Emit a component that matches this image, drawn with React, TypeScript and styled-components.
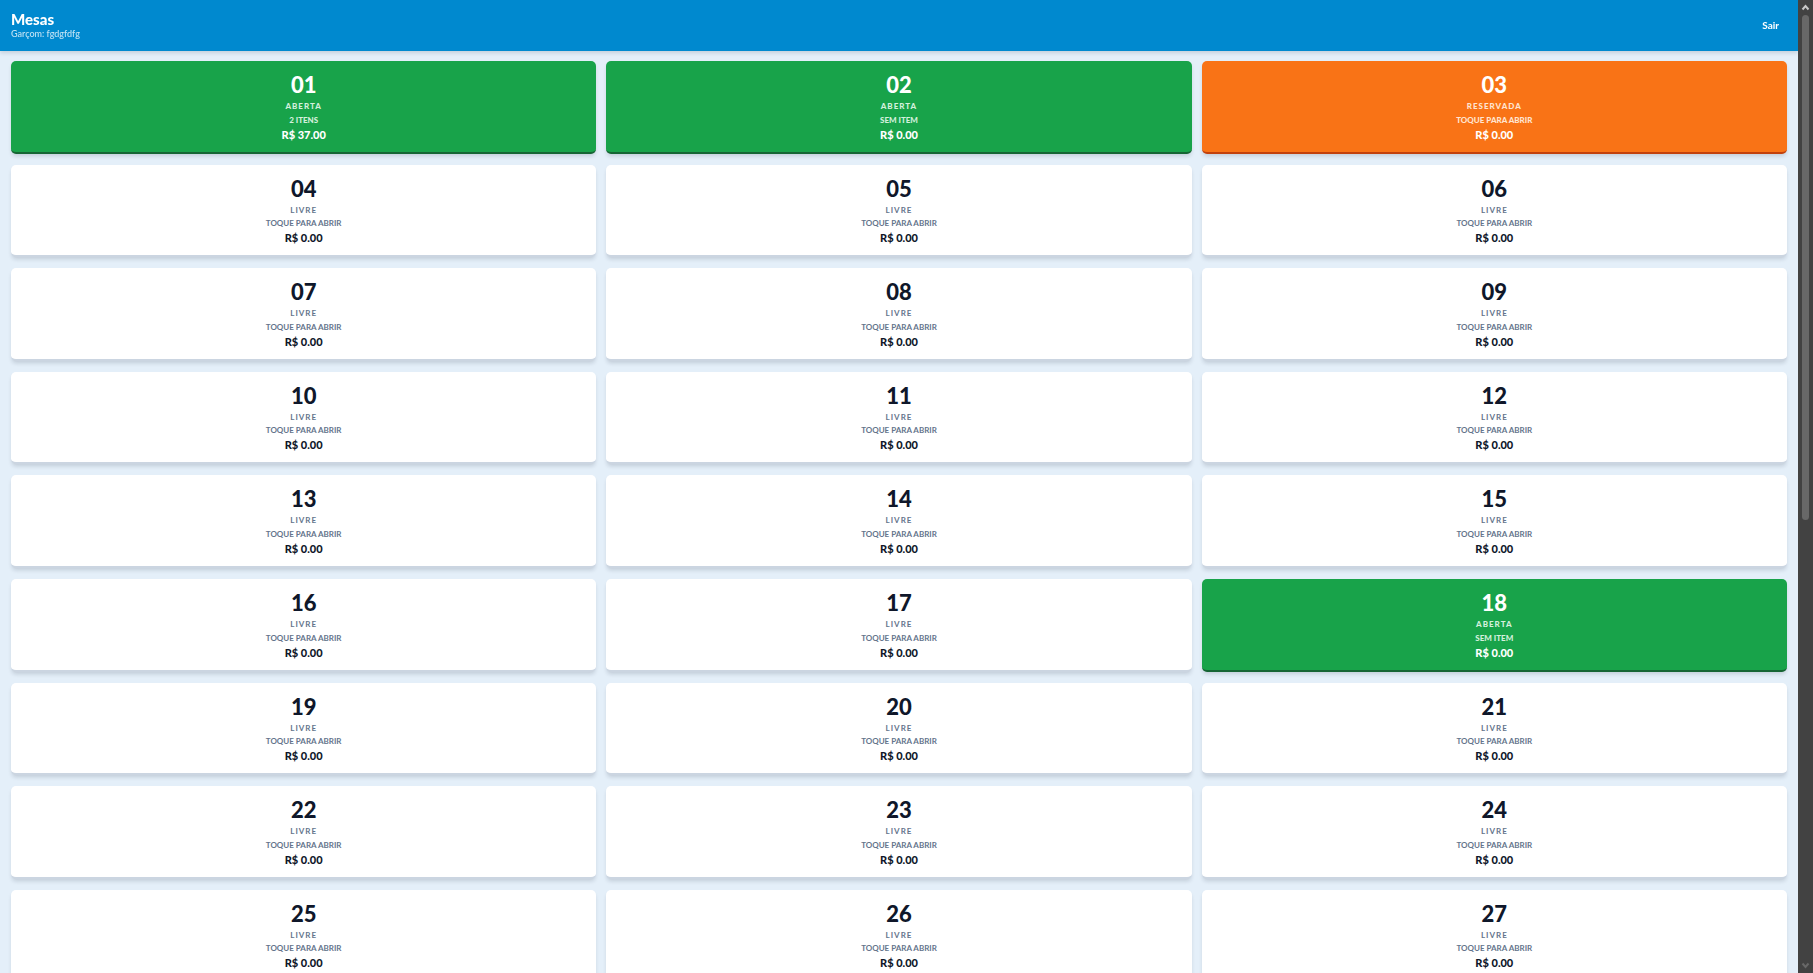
import React from "react";
import styled, { createGlobalStyle, css } from "styled-components";

type Status = "livre" | "aberta" | "reservada";

interface Table {
  number: number;
  status: Status;
  detail: string;
  total: number;
}

const palette = {
  livre: { background: "#ffffff", edge: "#cbd5e1", number: "#0f172a", label: "#64748b", price: "#0f172a" },
  aberta: { background: "#18a34a", edge: "#166534", number: "#ffffff", label: "#d3f0dc", price: "#ffffff" },
  reservada: { background: "#f97316", edge: "#c2410c", number: "#ffffff", label: "#ffe4d0", price: "#ffffff" },
};

const busyTables: Record<number, Partial<Table>> = {
  1: { status: "aberta", detail: "2 itens", total: 37 },
  2: { status: "aberta", detail: "Sem item" },
  3: { status: "reservada" },
  18: { status: "aberta", detail: "Sem item" },
};

const tables: Table[] = Array.from({ length: 27 }, (_, index) => ({
  number: index + 1,
  status: "livre",
  detail: "Toque para abrir",
  total: 0,
  ...busyTables[index + 1],
}));

const GlobalStyle = createGlobalStyle`
  *, *::before, *::after { box-sizing: border-box; }
  body {
    margin: 0;
    background: #e4eff9;
    font-family: Lato, "Open Sans", sans-serif;
  }
  button { font-family: inherit; border: 0; cursor: pointer; }
`;

const Shell = styled.div`
  display: flex;
  height: 100vh;
  overflow: hidden;
`;

const Viewport = styled.div`
  flex: 1;
  min-width: 0;
  overflow-y: auto;
  scrollbar-width: none;
`;

const Header = styled.header`
  position: sticky;
  top: 0;
  z-index: 1;
  display: flex;
  align-items: center;
  justify-content: space-between;
  height: 51px;
  padding: 0 11px;
  background: #0089cf;
  color: #ffffff;
  box-shadow: 0 2px 4px rgba(15, 23, 42, 0.14);
`;

const Title = styled.h1`
  margin: 0;
  font-size: 15px;
  line-height: 17px;
  font-weight: 900;
`;

const Waiter = styled.p`
  margin: 0;
  font-size: 9px;
  line-height: 12px;
  font-weight: 500;
  color: #c2e3f4;
`;

const LogoutButton = styled.button`
  padding: 5px 8px 7px;
  background: transparent;
  color: #ffffff;
  font-size: 10px;
  line-height: 14px;
  font-weight: 700;
`;

const TableGrid = styled.main`
  display: grid;
  grid-template-columns: repeat(3, minmax(0, 1fr));
  gap: 11px 10px;
  padding: 10px 11px;
`;

const TableCard = styled.button<{ $status: Status }>`
  display: flex;
  flex-direction: column;
  align-items: center;
  padding: 10px 10px 9px;
  border-radius: 5px;
  text-transform: uppercase;
  box-shadow: 0 3px 4px -1px rgba(15, 23, 42, 0.16);
  ${({ $status }) => css`
    background: ${palette[$status].background};
    border-bottom: 2px solid ${palette[$status].edge};
  `}
`;

const TableNumber = styled.span<{ $status: Status }>`
  margin-bottom: 1px;
  font-size: 22px;
  line-height: 28px;
  font-weight: 900;
  color: ${({ $status }) => palette[$status].number};
`;

const StatusLabel = styled.span<{ $status: Status }>`
  font-size: 8px;
  line-height: 1.7;
  font-weight: ${({ $status }) => ($status === "livre" ? 700 : 900)};
  letter-spacing: 1px;
  color: ${({ $status }) => palette[$status].label};
`;

const Detail = styled.span<{ $status: Status }>`
  font-size: 8px;
  line-height: 13px;
  font-weight: ${({ $status }) => ($status === "livre" ? 700 : 900)};
  color: ${({ $status }) => palette[$status].label};
`;

const Price = styled.span<{ $status: Status }>`
  font-size: 11px;
  line-height: 16px;
  font-weight: 900;
  color: ${({ $status }) => palette[$status].price};
`;

const ScrollRail = styled.div`
  display: flex;
  flex-direction: column;
  align-items: center;
  width: 15px;
  background: #424242;
`;

const RailArrow = styled.svg`
  flex: none;
  width: 15px;
  height: 15px;
`;

const RailTrack = styled.div`
  flex: 1;
  width: 7px;
`;

const RailThumb = styled.div`
  height: 53.5%;
  border-radius: 4px;
  background: #686868;
`;

export default function App() {
  return (
    <>
      <GlobalStyle />
      <Shell>
        <Viewport>
          <Header>
            <div>
              <Title>Mesas</Title>
              <Waiter>Garçom: fgdgfdfg</Waiter>
            </div>
            <LogoutButton type="button">Sair</LogoutButton>
          </Header>
          <TableGrid>
            {tables.map(({ number, status, detail, total }) => (
              <TableCard key={number} type="button" $status={status}>
                <TableNumber $status={status}>{String(number).padStart(2, "0")}</TableNumber>
                <StatusLabel $status={status}>{status}</StatusLabel>
                <Detail $status={status}>{detail}</Detail>
                <Price $status={status}>{`R$ ${total.toFixed(2)}`}</Price>
              </TableCard>
            ))}
          </TableGrid>
        </Viewport>
        <ScrollRail aria-hidden="true">
          <RailArrow viewBox="0 0 15 15">
            <path d="M4.5 9.5 7.5 6l3 3.5" fill="none" stroke="#c8c8c8" strokeWidth="2" />
          </RailArrow>
          <RailTrack>
            <RailThumb />
          </RailTrack>
          <RailArrow viewBox="0 0 15 15">
            <path d="M4.5 5.5 7.5 9l3-3.5" fill="none" stroke="#686868" strokeWidth="2" />
          </RailArrow>
        </ScrollRail>
      </Shell>
    </>
  );
}
